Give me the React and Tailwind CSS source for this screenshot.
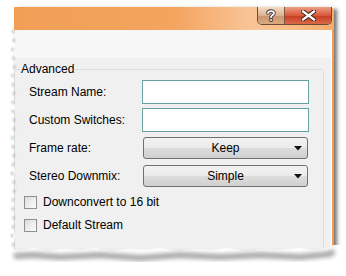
import React from 'react';

const font = { fontFamily: '"Liberation Sans", Arial, sans-serif' };

const TextField = () => (
  <div className="h-[24px] w-[167px] border border-[#67a2a2] bg-white" />
);

const Combo = ({ value }) => (
  <div className="relative ml-[1px] flex h-[22px] w-[165px] items-center justify-center rounded-[3px] border border-[#707070] bg-[linear-gradient(#f2f2f2_0%,#ebebeb_48%,#dddddd_52%,#cfcfcf_100%)] text-[12px] text-black">
    <span>{value}</span>
    <svg className="absolute right-[5px] top-[8px]" width="8" height="5" viewBox="0 0 8 5">
      <path d="M0 0 H8 L4 4.5 Z" fill="#111" />
    </svg>
  </div>
);

const Row = ({ label, children, className = '' }) => (
  <div className={`flex items-center ${className}`}>
    <div className="w-[127px] pl-[14px] text-[12px] text-black">{label}</div>
    {children}
  </div>
);

const Check = ({ label, className = '' }) => (
  <div className={`flex h-[13px] items-center pl-[9px] ${className}`}>
    <div className="h-[13px] w-[13px] shrink-0 border border-[#8e8f8f] bg-[linear-gradient(135deg,#dcdcdc,#fbfbfb)] p-[2px]">
      <div className="h-full w-full bg-[linear-gradient(135deg,#e2e2e2,#f8f8f8)]" />
    </div>
    <span className="ml-[6px] text-[12px] leading-[13px] text-black">{label}</span>
  </div>
);

// torn paper edge along the left side and the bottom
const TornEdges = () => {
  const bottom = 'M0 276 L0 249 L20 250 L34 248 L48 251 L62 249 L80 250 L96 248 L112 251 L130 249 L146 250 L160 248 L178 251 L194 249 L212 250 L228 248 L246 251 L262 249 L280 250 L298 248 L314 250 L326 248 L334 245 L346 245 L346 276 Z';
  const left = 'M0 0 L13 0 L14 20 L12 34 L15 48 L12 60 L14 76 L12 92 L15 108 L12 124 L14 140 L12 156 L15 172 L12 188 L14 204 L12 220 L15 236 L12 250 L0 250 Z';
  return (
    <svg className="pointer-events-none absolute left-0 top-0" width="346" height="276" viewBox="0 0 346 276">
      <defs>
        <filter id="blur" x="-20%" y="-50%" width="140%" height="200%">
          <feGaussianBlur stdDeviation="2" />
        </filter>
        <filter id="soft" x="-50%" y="-20%" width="200%" height="140%">
          <feGaussianBlur stdDeviation="0.8" />
        </filter>
      </defs>
      <path d={bottom} fill="#fff" />
      <path
        d="M14 251 L34 250 L60 252 L100 250 L140 253 L180 250 L220 252 L260 250 L300 252 L330 249 L334 246"
        stroke="#8a8a8a"
        strokeWidth="6"
        fill="none"
        filter="url(#blur)"
        transform="translate(0 5)"
        opacity="0.75"
      />
      <path d={left} fill="#fff" />
      <path
        d="M13 30 L14 40 L12 52 L15 64 L12 78 L14 92 L12 108 L15 124 L12 140 L14 156 L12 172 L15 188 L12 204 L14 220 L12 236 L14 250"
        stroke="#a8a8a8"
        strokeWidth="1.8"
        strokeDasharray="3 6"
        fill="none"
        filter="url(#soft)"
      />
    </svg>
  );
};

export default function App() {
  return (
    <div className="relative h-[276px] w-[346px] overflow-hidden bg-white" style={font}>
      <div className="ml-[14px] mt-[7px] h-[276px] w-[320px] shadow-[3px_2px_4px_rgba(0,0,0,0.55)]">
        {/* title bar */}
        <div className="flex h-[23px] items-start justify-end rounded-tr-[4px] bg-[linear-gradient(90deg,#f19f57_0%,#f4a45f_50%,#f8c597_74%,#f7bd88_86%,#f4ab6c_100%)] pr-[2px]">
          <div className="flex h-[18px] overflow-hidden rounded-b-[5px] border border-t-0 border-[#6e4a38]">
            <div className="flex w-[27px] items-center justify-center border-r border-[#7e5640] bg-[linear-gradient(#f2dcc6,#dbb290_50%,#c89670_52%,#d9aa80)]">
              <svg width="10" height="13" viewBox="0 0 10 13">
                <path d="M2 4 C2 1.5 8 1.5 8 4 C8 6 5 6 5 8.2" stroke="#3c3030" strokeWidth="3.6" fill="none" strokeLinecap="round" />
                <path d="M2 4 C2 1.5 8 1.5 8 4 C8 6 5 6 5 8.2" stroke="#fff" strokeWidth="1.8" fill="none" strokeLinecap="round" />
                <circle cx="5" cy="11" r="1.9" fill="#3c3030" />
                <circle cx="5" cy="11" r="1" fill="#fff" />
              </svg>
            </div>
            <div className="flex w-[46px] items-center justify-center bg-[linear-gradient(#eca087,#d9583b_50%,#c63b22_52%,#d96a48)]">
              <svg width="15" height="11" viewBox="0 0 15 11">
                <path d="M2 1.5 L13 9.5 M13 1.5 L2 9.5" stroke="#4a2a22" strokeWidth="4.4" strokeLinecap="square" />
                <path d="M2 1.5 L13 9.5 M13 1.5 L2 9.5" stroke="#fff" strokeWidth="2.2" strokeLinecap="square" />
              </svg>
            </div>
          </div>
        </div>

        {/* client area */}
        <div className="h-[253px] border-r-2 border-[#f49a50]">
          <div className="h-full border-r border-white bg-[#f0f0f0]">
            <div className="h-[28px] bg-[#f7f7f7]" />
            <div className="relative mr-[7px] mt-[11px] h-[220px] rounded-[3px] border border-[#d5dfe5] pt-[10px]">
              <span className="absolute left-[5px] top-[-9px] bg-[#f0f0f0] px-[1px] text-[12px] leading-[16px] text-black">
                Advanced
              </span>
              <Row label="Stream Name:">
                <TextField />
              </Row>
              <Row label="Custom Switches:" className="mt-[4px]">
                <TextField />
              </Row>
              <Row label="Frame rate:" className="mt-[5px]">
                <Combo value="Keep" />
              </Row>
              <Row label="Stereo Downmix:" className="mt-[6px]">
                <Combo value="Simple" />
              </Row>
              <Check label="Downconvert to 16 bit" className="mt-[9px]" />
              <Check label="Default Stream" className="mt-[10px]" />
            </div>
          </div>
        </div>
      </div>
      <TornEdges />
    </div>
  );
}
